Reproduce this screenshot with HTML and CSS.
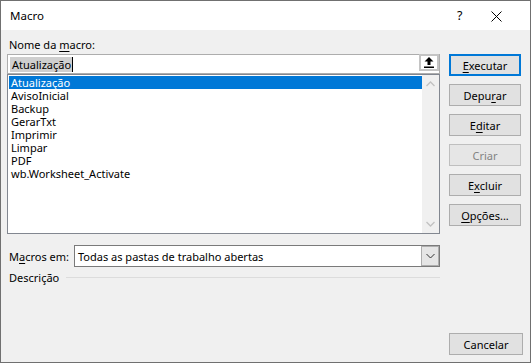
FILE: index.html
```html
<!DOCTYPE html>
<html>
<head>
<meta charset="utf-8">
<link rel="stylesheet" href="styles.css">
</head>
<body>
<div class="window">
  <div class="titlebar">
    <span class="title">Macro</span>
    <span class="help">?</span>
    <span class="close"><svg width="11" height="11" viewBox="0 0 11 11"><path d="M0.5 0.5 L10.5 10.5 M10.5 0.5 L0.5 10.5" stroke="#000" stroke-width="1" fill="none"/></svg></span>
  </div>
  <div class="body">
    <div class="left">
      <div class="label">Nome da <u>m</u>acro:</div>
      <div class="namebox">
        <div class="namefield"><span class="sel">Atualização</span><span class="caret"></span></div>
        <div class="upbtn"><svg width="10" height="11" viewBox="0 0 10 11"><path d="M5 0 L9.5 4.5 L6.5 4.5 L6.5 8 L3.5 8 L3.5 4.5 L0.5 4.5 Z" fill="#000"/><rect x="0" y="9.5" width="10" height="1.5" fill="#000"/></svg></div>
      </div>
      <div class="list">
        <div class="items">
          <div class="item selected">Atualização</div>
          <div class="item">AvisoInicial</div>
          <div class="item">Backup</div>
          <div class="item">GerarTxt</div>
          <div class="item">Imprimir</div>
          <div class="item">Limpar</div>
          <div class="item">PDF</div>
          <div class="item">wb.Worksheet_Activate</div>
        </div>
        <div class="scroll">
          <svg width="9" height="6" viewBox="0 0 9 6"><path d="M0.5 5 L4.5 1 L8.5 5" stroke="#c2c2c2" stroke-width="1.3" fill="none"/></svg>
          <svg width="9" height="6" viewBox="0 0 9 6"><path d="M0.5 1 L4.5 5 L8.5 1" stroke="#c2c2c2" stroke-width="1.3" fill="none"/></svg>
        </div>
      </div>
      <div class="macrosrow">
        <span class="mlabel">M<u>a</u>cros em:</span>
        <div class="combo">
          <span class="ctext">Todas as pastas de trabalho abertas</span>
          <div class="cbtn"><svg width="9" height="6" viewBox="0 0 9 6"><path d="M0.5 1 L4.5 5 L8.5 1" stroke="#333" stroke-width="1" fill="none"/></svg></div>
        </div>
      </div>
      <div class="desc"><span>Descrição</span><div class="rule"></div></div>
    </div>
    <div class="right">
      <div class="btn default"><u>E</u>xecutar</div>
      <div class="btn">Depu<u>r</u>ar</div>
      <div class="btn">E<u>d</u>itar</div>
      <div class="btn disabled">Criar</div>
      <div class="btn">E<u>x</u>cluir</div>
      <div class="btn"><u>O</u>pções...</div>
      <div class="btn cancel">Cancelar</div>
    </div>
  </div>
</div>
</body>
</html>
```
FILE: styles.css
```css
* { box-sizing: border-box; }
html, body { margin: 0; padding: 0; }
body {
  font-family: "Noto Sans", "Open Sans", sans-serif;
  font-size: 11px;
  color: #000;
  background: #f0f0f0;
}
u { text-decoration: underline; text-underline-offset: 2px; }
.window {
  width: 531px;
  height: 363px;
  border: 1px solid #707070;
  background: #f0f0f0;
  display: flex;
  flex-direction: column;
}
.titlebar {
  height: 29px;
  background: #fff;
  display: flex;
  align-items: center;
  padding-left: 9px;
  flex-shrink: 0;
  font-size: 11.5px;
}
.title { flex: 1; }
.help { width: 34px; font-size: 12.5px; }
.close { width: 39px; display: flex; align-items: center; padding-top: 1px; }
.body {
  flex: 1;
  display: flex;
  padding: 7px 7px 7px 6px;
}
.left {
  width: 433px;
  display: flex;
  flex-direction: column;
}
.label {
  height: 15px;
  line-height: 15px;
  padding-left: 2px;
  margin-bottom: 2px;
}
.namebox {
  height: 20px;
  border: 1px solid #adadad;
  background: #fff;
  display: flex;
}
.namefield {
  flex: 1;
  display: flex;
  align-items: center;
  padding-left: 2px;
}
.sel {
  background: #cfcfcf;
  line-height: 15px;
  padding: 0 1px 0 2px;
}
.caret {
  width: 1px;
  height: 15px;
  background: #000;
}
.upbtn {
  width: 20px;
  height: 17px;
  margin-top: -1px;
  border: 2px solid #c4c4c4;
  background: #fff;
  display: flex;
  align-items: center;
  justify-content: center;
}
.list {
  height: 160px;
  border: 1px solid #828790;
  background: #fff;
  display: flex;
  padding: 1px 0 0 1px;
}
.items { flex: 1; }
.item {
  height: 13px;
  line-height: 13px;
  padding-left: 2px;
  white-space: nowrap;
}
.item.selected { background: #0078d7; color: #fff; }
.scroll {
  width: 17px;
  background: #f0f0f0;
  display: flex;
  flex-direction: column;
  justify-content: space-between;
  align-items: center;
  padding: 6px 0 6px;
  margin-top: -1px;
}
.macrosrow {
  margin-top: 11px;
  display: flex;
  align-items: center;
  height: 22px;
}
.mlabel { width: 67px; flex-shrink: 0; padding-left: 2px; white-space: nowrap; }
.combo {
  flex: 1;
  height: 22px;
  border: 1px solid #7a7a7a;
  background: #fff;
  display: flex;
  align-items: center;
}
.ctext { flex: 1; padding-left: 3px; white-space: nowrap; }
.cbtn {
  width: 18px;
  height: 20px;
  background: #e5e5e5;
  border: 1px solid #adadad;
  display: flex;
  align-items: center;
  justify-content: center;
}
.desc {
  margin-top: 3px;
  display: flex;
  align-items: center;
  height: 15px;
  padding-left: 2px;
}
.rule {
  flex: 1;
  height: 1px;
  background: #dcdcdc;
  margin-left: 7px;
}
.right {
  width: 72px;
  margin-left: 9px;
  padding-top: 17px;
  display: flex;
  flex-direction: column;
  gap: 8px;
}
.btn {
  height: 22px;
  border: 1px solid #adadad;
  background: #e1e1e1;
  display: flex;
  align-items: center;
  justify-content: center;
  white-space: nowrap;
}
.btn.default { border: 2px solid #0078d7; }
.btn.disabled { color: #838383; border-color: #bfbfbf; background: #e6e6e6; }
.btn.cancel { margin-top: auto; width: 74px; }
```
